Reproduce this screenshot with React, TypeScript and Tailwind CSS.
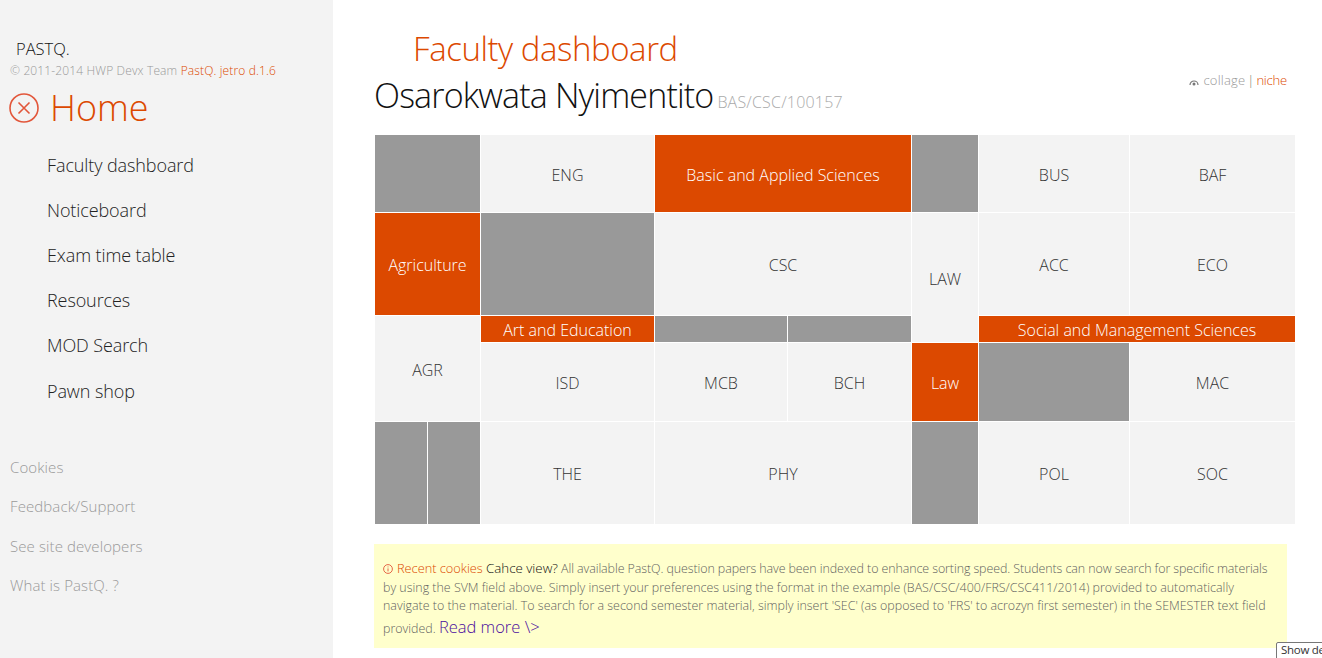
import React from "react";
const F = "[font-family:'Open_Sans',sans-serif]";
function Gray({ className = "" }: { className?: string }) {
  return <div className={`bg-[#999999] ${className}`} />;
}
function Cell({ children, className = "" }: { children: React.ReactNode; className?: string }) {
  return <div className={`flex items-center justify-center bg-[#f3f3f3] pt-[2px] text-[16px] font-light text-[#333333] ${className}`}>{children}</div>;
}
function Org({ children, className = "" }: { children: React.ReactNode; className?: string }) {
  return <div className={`flex items-center justify-center bg-[#dc4900] pt-[2px] text-[16px] font-light text-white ${className}`}>{children}</div>;
}
const nav = ["Faculty dashboard", "Noticeboard", "Exam time table", "Resources", "MOD Search", "Pawn shop"];
const foot = ["Cookies", "Feedback/Support", "See site developers", "What is PastQ. ?"];
export default function App() {
  return (
    <div className={`relative flex h-[658px] w-[1322px] overflow-hidden bg-white ${F}`}>
      <aside className="w-[333px] shrink-0 bg-[#f3f3f3] pt-[39px]">
        <div className="pl-[16px] text-[16.5px] leading-[20px] font-light text-[#111111]">PASTQ.</div>
        <div className="mt-[4px] pl-[10px] text-[12px] leading-[16px] font-light tracking-[0.14px] text-[#999999]">
          © 2011-2014 HWP Devx Team <span className="text-[#dc4900]">PastQ. jetro d.1.6</span>
        </div>
        <div className="mt-[6px] flex items-center pl-[9px] text-[#dc4900]">
          <svg width="30" height="30" viewBox="0 0 30 30" fill="none" stroke="#e2563a" strokeWidth="1.6">
            <circle cx="15" cy="15" r="14" />
            <path d="M9.5 9.5l11 11M20.5 9.5l-11 11" />
          </svg>
          <span className="ml-[11px] text-[36px] leading-[46px] font-light">Home</span>
        </div>
        <nav className="mt-[19px] flex flex-col gap-[15.12px] pl-[47px]">
          {nav.map((n) => (
            <div key={n} className="text-[18px] leading-[30px] font-light tracking-[-0.1px] text-[#222222]">{n}</div>
          ))}
        </nav>
        <div className="mt-[50.4px] flex flex-col gap-[16px] pl-[10px]">
          {foot.map((n) => (
            <div key={n} className="text-[15px] leading-[23.5px] font-light tracking-[0.1px] text-[#999999]">{n}</div>
          ))}
        </div>
      </aside>
      <main className="flex-1 pl-[41px] pt-[26px]">
        <div className="pl-[39px] text-[33px] leading-[46px] font-light tracking-[-0.45px] text-[#dc4900]">Faculty dashboard</div>
        <div className="relative mt-[1px] flex h-[44px] w-[913px] items-baseline">
          <span className="text-[34px] leading-[44px] font-light tracking-[-0.85px] text-[#111111]">Osarokwata Nyimentito</span>
          <span className="ml-[4px] text-[16px] font-light tracking-[0.2px] text-[#aaaaaa]">BAS/CSC/100157</span>
          <div className="absolute right-0 top-[-2px] flex items-center text-[13px] font-light text-[#999999]">
            <svg width="10" height="8" viewBox="0 0 10 8" className="mr-[4px] mt-[2px]" fill="none" stroke="#777777" strokeWidth="1.2">
              <path d="M1 7a4 4 0 0 1 8 0" />
              <circle cx="5" cy="6" r="1.5" fill="#777777" stroke="none" />
            </svg>
            <span className="tracking-[0.2px]">collage</span>
            <span className="mx-[2px] text-[#777777]">|</span>
            <span className="tracking-[-0.2px] text-[#dc4900]">niche</span>
          </div>
        </div>
        <div className="mt-[18px] ml-[1px] grid w-[920px] grid-cols-[52px_52px_173px_132px_123px_66px_150px_165px] grid-rows-[77px_102px_26px_78px_102px] gap-px">
          <Gray className="col-span-2" />
          <Cell>ENG</Cell>
          <Org className="col-span-2">Basic and Applied Sciences</Org>
          <Gray />
          <Cell>BUS</Cell>
          <Cell>BAF</Cell>

          <Org className="col-span-2">Agriculture</Org>
          <Gray />
          <Cell className="col-span-2">CSC</Cell>
          <Cell className="row-span-2">LAW</Cell>
          <Cell>ACC</Cell>
          <Cell>ECO</Cell>

          <Cell className="col-span-2 row-span-2">AGR</Cell>
          <Org>Art and Education</Org>
          <Gray />
          <Gray />
          <Org className="col-span-2">Social and Management Sciences</Org>

          <Cell>ISD</Cell>
          <Cell>MCB</Cell>
          <Cell>BCH</Cell>
          <Org>Law</Org>
          <Gray />
          <Cell>MAC</Cell>

          <Gray />
          <Gray />
          <Cell>THE</Cell>
          <Cell className="col-span-2">PHY</Cell>
          <Gray />
          <Cell>POL</Cell>
          <Cell>SOC</Cell>
        </div>
        <div className="mt-[20px] h-[104px] w-[913px] bg-[#ffffcc] pt-[16px] pr-[6px] pl-[9px] text-[12.45px] leading-[18.5px] font-light text-[#5f5f5f]">
          <span className="text-[12.75px] leading-[16px] text-[#dc4900]">
            <svg width="10" height="10" viewBox="0 0 10 10" className="mr-[4px] inline-block align-[-1px]" fill="none" stroke="#e2563a" strokeWidth="0.9">
              <circle cx="5" cy="5" r="4.4" />
              <path d="M5 2.5v.9M5 4.4v3" />
            </svg>
            Recent cookies
          </span>{" "}
          <span className="text-[13.3px] leading-[16px] text-[#111111]">Cahce view?</span>{" "}
          <span className="tracking-[-0.09px]">All available PastQ. question papers have been indexed to enhance sorting speed. Students can now search for specific materials</span> by using the SVM field above. Simply insert your preferences using the format in the example (BAS/CSC/400/FRS/CSC411/2014) provided to automatically navigate to the material. To search for a second semester material, simply insert 'SEC' (as opposed to 'FRS' to acrozyn first semester) in the SEMESTER text field provided. <span className="text-[16.5px] leading-[22px] text-[#4b0d9e]">Read more \&gt;</span>
        </div>
      </main>
      <div className="absolute left-[1276px] top-[642px] h-[20px] w-[80px] rounded-[2px] border border-[#777777] bg-white pl-[4px] text-[11.5px] leading-[14px] tracking-[-0.3px] whitespace-nowrap text-[#333333]">Show details</div>
    </div>
  );
}
